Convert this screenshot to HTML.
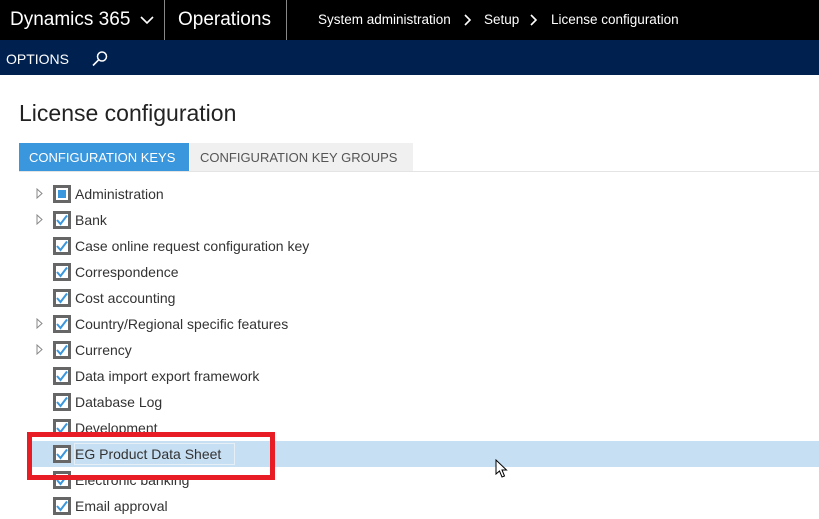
<!DOCTYPE html>
<html><head><meta charset="utf-8"><style>
*{margin:0;padding:0;box-sizing:border-box}
body{width:819px;height:509px;overflow:hidden;background:#fff;font-family:"Liberation Sans",sans-serif;position:relative}
.abs{position:absolute}
.top{left:0;top:0;width:819px;height:40px;background:#000;color:#fff}
.nav{left:0;top:40px;width:819px;height:35px;background:#002050;color:#fff}
.row{position:absolute;left:0;height:26px;width:819px}
.cb{position:absolute;left:53px;top:4px;width:18px;height:18px;border:3px solid #666;background:#fff}
.cb svg{position:absolute;left:0;top:0}
.lbl{position:absolute;left:75px;top:5px;font-size:14px;color:#333;line-height:17px;white-space:nowrap}
.arr{position:absolute;left:36px;top:7px}
</style></head><body>
<div class="abs top">
  <div class="abs" style="left:10px;top:9px;font-size:19px">Dynamics 365</div>
  <svg class="abs" style="left:140px;top:15px" width="14" height="10"><path d="M1 2 L7 8 L13 2" stroke="#fff" stroke-width="1.6" fill="none"/></svg>
  <div class="abs" style="left:164px;top:0;width:1px;height:40px;background:#888"></div>
  <div class="abs" style="left:178px;top:9px;font-size:19px">Operations</div>
  <div class="abs" style="left:286px;top:0;width:1px;height:40px;background:#888"></div>
  <div class="abs" style="left:318px;top:12px;font-size:13.5px;white-space:nowrap">System administration</div>
  <svg class="abs" style="left:464px;top:14px" width="8" height="12"><path d="M1 1 L6 6 L1 11" stroke="#fff" stroke-width="1.6" fill="none"/></svg>
  <div class="abs" style="left:484px;top:12px;font-size:13.5px">Setup</div>
  <svg class="abs" style="left:530px;top:14px" width="8" height="12"><path d="M1 1 L6 6 L1 11" stroke="#fff" stroke-width="1.6" fill="none"/></svg>
  <div class="abs" style="left:551px;top:12px;font-size:13.5px;white-space:nowrap">License configuration</div>
</div>
<div class="abs nav">
  <div class="abs" style="left:6px;top:11px;font-size:14px">OPTIONS</div>
  <svg class="abs" style="left:91px;top:10px" width="18" height="18"><circle cx="11" cy="6.5" r="4.5" stroke="#fff" stroke-width="1.5" fill="none"/><path d="M7.8 9.7 L2 15.5" stroke="#fff" stroke-width="1.6"/></svg>
</div>
<div class="abs" style="left:19px;top:100px;font-size:23px;color:#222">License configuration</div>
<div class="abs" style="left:19px;top:143px;width:170px;height:29px;background:#3a96dd;color:#fff;font-size:13px;line-height:29px;padding-left:10px;white-space:nowrap">CONFIGURATION KEYS</div>
<div class="abs" style="left:190px;top:143px;width:223px;height:29px;background:#f0f0f0;color:#555;font-size:13px;line-height:29px;padding-left:10px;white-space:nowrap">CONFIGURATION KEY GROUPS</div>
<div class="abs" style="left:19px;top:171px;width:800px;height:1px;background:#e4e4e4"></div>

<div class="abs" style="left:31px;top:441px;width:788px;height:26px;background:#c7dff3"></div>
<div class="abs" style="left:74px;top:443px;width:161px;height:22px;border:1px solid #e6eef6"></div>

<div class="row" style="top:181px"><svg class="arr" width="8" height="11"><path d="M1 1 L6 5.5 L1 10 Z" stroke="#888" fill="none"/></svg><div class="cb"><div style="position:absolute;left:2px;top:2px;width:8px;height:8px;background:#3a96dd"></div></div><div class="lbl">Administration</div></div>
<div class="row" style="top:207px"><svg class="arr" width="8" height="11"><path d="M1 1 L6 5.5 L1 10 Z" stroke="#888" fill="none"/></svg><div class="cb"><svg width="12" height="12"><path d="M1 6 L4.5 10 L11 1.5" stroke="#3a96dd" stroke-width="2" fill="none"/></svg></div><div class="lbl">Bank</div></div>
<div class="row" style="top:233px"><div class="cb"><svg width="12" height="12"><path d="M1 6 L4.5 10 L11 1.5" stroke="#3a96dd" stroke-width="2" fill="none"/></svg></div><div class="lbl">Case online request configuration key</div></div>
<div class="row" style="top:259px"><div class="cb"><svg width="12" height="12"><path d="M1 6 L4.5 10 L11 1.5" stroke="#3a96dd" stroke-width="2" fill="none"/></svg></div><div class="lbl">Correspondence</div></div>
<div class="row" style="top:285px"><div class="cb"><svg width="12" height="12"><path d="M1 6 L4.5 10 L11 1.5" stroke="#3a96dd" stroke-width="2" fill="none"/></svg></div><div class="lbl">Cost accounting</div></div>
<div class="row" style="top:311px"><svg class="arr" width="8" height="11"><path d="M1 1 L6 5.5 L1 10 Z" stroke="#888" fill="none"/></svg><div class="cb"><svg width="12" height="12"><path d="M1 6 L4.5 10 L11 1.5" stroke="#3a96dd" stroke-width="2" fill="none"/></svg></div><div class="lbl">Country/Regional specific features</div></div>
<div class="row" style="top:337px"><svg class="arr" width="8" height="11"><path d="M1 1 L6 5.5 L1 10 Z" stroke="#888" fill="none"/></svg><div class="cb"><svg width="12" height="12"><path d="M1 6 L4.5 10 L11 1.5" stroke="#3a96dd" stroke-width="2" fill="none"/></svg></div><div class="lbl">Currency</div></div>
<div class="row" style="top:363px"><div class="cb"><svg width="12" height="12"><path d="M1 6 L4.5 10 L11 1.5" stroke="#3a96dd" stroke-width="2" fill="none"/></svg></div><div class="lbl">Data import export framework</div></div>
<div class="row" style="top:389px"><div class="cb"><svg width="12" height="12"><path d="M1 6 L4.5 10 L11 1.5" stroke="#3a96dd" stroke-width="2" fill="none"/></svg></div><div class="lbl">Database Log</div></div>
<div class="row" style="top:415px"><div class="cb"><svg width="12" height="12"><path d="M1 6 L4.5 10 L11 1.5" stroke="#3a96dd" stroke-width="2" fill="none"/></svg></div><div class="lbl">Development</div></div>
<div class="row" style="top:441px"><div class="cb"><svg width="12" height="12"><path d="M1 6 L4.5 10 L11 1.5" stroke="#3a96dd" stroke-width="2" fill="none"/></svg></div><div class="lbl">EG Product Data Sheet</div></div>
<div class="row" style="top:467px"><div class="cb"><svg width="12" height="12"><path d="M1 6 L4.5 10 L11 1.5" stroke="#3a96dd" stroke-width="2" fill="none"/></svg></div><div class="lbl">Electronic banking</div></div>
<div class="row" style="top:493px"><div class="cb"><svg width="12" height="12"><path d="M1 6 L4.5 10 L11 1.5" stroke="#3a96dd" stroke-width="2" fill="none"/></svg></div><div class="lbl">Email approval</div></div>

<div class="abs" style="left:27px;top:432px;width:248px;height:48px;border:5px solid #e81c24"></div>
<svg class="abs" style="left:495px;top:459px" width="14" height="20"><path d="M1 1 L1 15 L4.5 12 L7 18 L9.5 17 L7 11 L11.5 11 Z" fill="#fff" stroke="#000" stroke-width="1"/></svg>
</body></html>
